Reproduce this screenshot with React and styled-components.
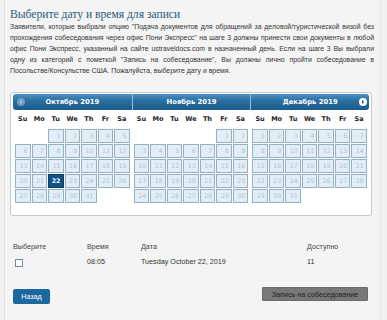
import React from "react";
import styled, { createGlobalStyle, css } from "styled-components";

const GlobalStyle = createGlobalStyle`
  html, body { margin: 0; padding: 0; }
  body {
    background: #f1f1f1;
    font-family: "Liberation Sans", Arial, sans-serif;
    color: #333;
  }
`;

const Page = styled.div`
  box-sizing: border-box;
  width: 377px;
  min-height: 320px;
  margin-left: 4px;
  padding: 0 0 0 5px;
  border-left: 1px solid #e0e0e0;
  border-right: 1px solid #e6e6e6;
  background: #f4f4f4;
`;

const Content = styled.div`
  width: 364px;
`;

const Title = styled.h1`
  margin: 0;
  padding-top: 8px;
  font-family: "Liberation Serif", "Times New Roman", serif;
  font-weight: normal;
  font-size: 11.6px;
  line-height: 13px;
  color: #2b5b7e;
`;

const Para = styled.div`
  font-size: 6.9px;
  line-height: 11px;
  color: #333;
`;

const Line = styled.div`
  text-align: justify;
  text-align-last: ${(p) => (p.$last ? "left" : "justify")};
  white-space: nowrap;
`;

const CalendarBox = styled.div`
  box-sizing: border-box;
  width: 362px;
  margin-top: 16px;
  padding: 1px 2px 12px 2px;
  background: #fff;
  border: 1px solid #c9c9c9;
  border-radius: 3px;
  display: flex;
`;

const Month = styled.div`
  flex: 1;
  display: flex;
  flex-direction: column;
`;

const MonthHeader = styled.div`
  position: relative;
  height: 16px;
  line-height: 16px;
  text-align: center;
  color: #fff;
  font-family: "DejaVu Sans", Verdana, sans-serif;
  font-weight: bold;
  font-size: 6.8px;
  background: linear-gradient(#4b8fc3, #2a6d9f 45%, #1b5c8c);
  border-left: ${(p) => (p.$first ? "none" : "1px solid #9bbcd6")};
  border-radius: ${(p) =>
    p.$first ? "3px 0 0 3px" : p.$last ? "0 3px 3px 0" : "0"};
`;

const NavIcon = styled.span`
  position: absolute;
  top: 4px;
  width: 8px;
  height: 8px;
  border-radius: 50%;
  ${(p) =>
    p.$prev
      ? css`
          left: 4px;
          background: #7fa9cb;
          opacity: 0.8;
        `
      : css`
          right: 2px;
          background: #fff;
        `}
`;

const NavArrow = styled.svg`
  position: absolute;
  left: 0;
  top: 0;
  width: 8px;
  height: 8px;
`;

const DayNames = styled.div`
  display: grid;
  grid-template-columns: repeat(7, 15.5px);
  column-gap: 1px;
  padding: 0 2px;
  height: 19px;
  line-height: 19px;
  font-family: "DejaVu Sans", Verdana, sans-serif;
  font-weight: bold;
  font-size: 6.5px;
  color: #222;
  text-align: center;
`;

const Grid = styled.div`
  display: grid;
  grid-template-columns: repeat(7, 15.5px);
  grid-auto-rows: 14px;
  gap: 1px;
  padding: 0 2px;
`;

const Cell = styled.div`
  box-sizing: border-box;
  border: 1px solid #93b1c1;
  background: #e2eef7;
  color: #b0c2cf;
  font-family: "DejaVu Sans", Verdana, sans-serif;
  font-size: 6.3px;
  line-height: 12px;
  text-align: right;
  padding-right: 2px;
  ${(p) =>
    p.$selected &&
    css`
      background: #0f5283;
      border-color: #0b3f66;
      color: #fff;
      font-weight: bold;
    `}
`;

const Empty = styled.div``;

const Table = styled.div`
  margin-top: 23px;
  padding-left: 3px;
  display: grid;
  grid-template-columns: 74px 54px 166px auto;
  grid-auto-rows: 15px;
  align-items: center;
  font-size: 7.2px;
  color: #333;
`;

const Label = styled.div`
  color: #444;
`;

const Checkbox = styled.span`
  display: block;
  box-sizing: border-box;
  width: 8px;
  height: 8px;
  margin-left: 2px;
  margin-top: 2px;
  border: 1px solid #6f8ea4;
  background: #fff;
`;

const Buttons = styled.div`
  margin-top: 18px;
  display: flex;
  justify-content: space-between;
  align-items: flex-start;
  width: 362px;
`;

const BackButton = styled.button`
  box-sizing: border-box;
  margin: 2px 0 0 3px;
  width: 37px;
  height: 15px;
  padding: 0;
  border: none;
  border-radius: 2px;
  background: #1c679e;
  color: #fff;
  font-family: "Liberation Sans", Arial, sans-serif;
  font-size: 7.2px;
`;

const SubmitButton = styled.button`
  box-sizing: border-box;
  margin-right: 4px;
  width: 106px;
  height: 14px;
  padding: 0;
  border: 1px solid #6a6a6a;
  border-radius: 1px;
  background: #787878;
  color: #1f1f1f;
  font-family: "Liberation Sans", Arial, sans-serif;
  font-size: 7.2px;
`;

const months = [
  { name: "Октябрь 2019", offset: 2, days: 31 },
  { name: "Ноябрь 2019", offset: 5, days: 30 },
  { name: "Декабрь 2019", offset: 0, days: 31 },
];

const dayNames = ["Su", "Mo", "Tu", "We", "Th", "Fr", "Sa"];

const lines = [
  'Заявители, которые выбрали опцию "Подача документов для обращений за деловой/туристической визой без',
  'прохождения собеседования через офис Пони Экспресс" на шаге 3 должны принести свои документы в любой',
  "офис Пони Экспресс, указанный на сайте ustraveldocs.com в назначенный день. Если на шаге 3 Вы выбрали",
  'одну из категорий с пометкой "Запись на собеседование", Вы должны лично пройти собеседование в',
  "Посольстве/Консульстве США. Пожалуйста, выберите дату и время.",
];

function MonthView({ m, idx }) {
  const cells = [];
  for (let i = 0; i < m.offset; i++) cells.push(<Empty key={"e" + i} />);
  for (let d = 1; d <= m.days; d++)
    cells.push(
      <Cell key={d} $selected={idx === 0 && d === 22}>
        {d}
      </Cell>
    );
  return (
    <Month>
      <MonthHeader $first={idx === 0} $last={idx === 2}>
        {idx === 0 && (
          <NavIcon $prev>
            <NavArrow viewBox="0 0 8 8">
              <path d="M5 2 L2.6 4 L5 6 Z" fill="#c9dcec" />
            </NavArrow>
          </NavIcon>
        )}
        {m.name}
        {idx === 2 && (
          <NavIcon>
            <NavArrow viewBox="0 0 8 8">
              <path d="M3 2 L5.4 4 L3 6 Z" fill="#1b5c8c" />
            </NavArrow>
          </NavIcon>
        )}
      </MonthHeader>
      <DayNames>
        {dayNames.map((n) => (
          <div key={n}>{n}</div>
        ))}
      </DayNames>
      <Grid>{cells}</Grid>
    </Month>
  );
}

export default function App() {
  return (
    <>
      <GlobalStyle />
      <Page>
        <Content>
          <Title>Выберите дату и время для записи</Title>
          <Para>
            {lines.map((l, i) => (
              <Line key={i} $last={i === lines.length - 1}>
                {l}
              </Line>
            ))}
          </Para>
          <CalendarBox>
            {months.map((m, i) => (
              <MonthView key={m.name} m={m} idx={i} />
            ))}
          </CalendarBox>
          <Table>
            <Label>Выберите</Label>
            <Label>Время</Label>
            <Label>Дата</Label>
            <Label>Доступно</Label>
            <div>
              <Checkbox />
            </div>
            <div>08:05</div>
            <div>Tuesday October 22, 2019</div>
            <div>11</div>
          </Table>
          <Buttons>
            <BackButton>Назад</BackButton>
            <SubmitButton>Запись на собеседование</SubmitButton>
          </Buttons>
        </Content>
      </Page>
    </>
  );
}
